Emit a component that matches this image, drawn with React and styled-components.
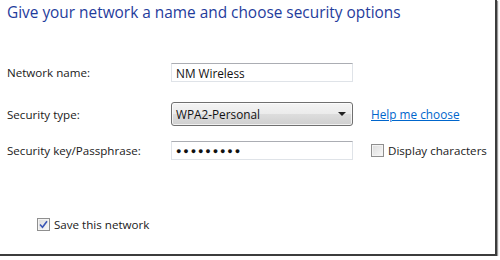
import React from "react";
import styled, { createGlobalStyle } from "styled-components";

const Global = createGlobalStyle`
  html, body { margin: 0; padding: 0; background: #fff; }
  body { font-family: "Open Sans", "Noto Sans", sans-serif; }
`;

const Frame = styled.div`
  box-sizing: border-box;
  width: 497px;
  height: 256px;
  border-right: 2px solid #3c3c3c;
  border-bottom: 2px solid #3c3c3c;
  box-shadow: 1px 1px 1px #9a9a9a;
  background: #fff;
  padding: 3px 0 0 7px;
  display: flex;
  flex-direction: column;
`;

const Title = styled.h1`
  margin: 0;
  font-size: 15.4px;
  font-weight: 400;
  line-height: 20px;
  color: #1f3c9c;
`;

const Form = styled.div`
  margin-top: 40px;
  display: grid;
  grid-template-columns: 146px 182px auto;
  column-gap: 18px;
  align-items: center;
`;

const Label = styled.div`
  font-size: 11.6px;
  color: #1a1a1a;
  height: ${p => p.$h}px;
  margin-bottom: ${p => p.$mb || 0}px;
  display: flex;
  align-items: center;
  white-space: nowrap;
`;

const TextBox = styled.div`
  box-sizing: border-box;
  height: 19px;
  margin-bottom: ${p => p.$mb || 0}px;
  border: 1px solid #dfe3e8;
  border-top-color: #abadb3;
  background: #fff;
  padding: 0 4px;
  font-size: 11.8px;
  color: #111;
  display: flex;
  align-items: center;
`;

const Dots = styled.span`
  font-size: 9px;
  letter-spacing: 1.9px;
  color: #111;
`;

const Select = styled.div`
  box-sizing: border-box;
  height: 24px;
  margin-bottom: 15px;
  border: 1px solid #707070;
  border-radius: 3px;
  background: linear-gradient(#f4f4f4 0%, #ebebeb 50%, #dddddd 51%, #cfcfcf 100%);
  box-shadow: inset 0 0 0 1px rgba(255,255,255,0.7);
  padding: 0 6px 0 4px;
  font-size: 11.8px;
  color: #111;
  display: flex;
  align-items: center;
  justify-content: space-between;
`;

const Arrow = styled.span`
  width: 0;
  height: 0;
  border-left: 4px solid transparent;
  border-right: 4px solid transparent;
  border-top: 4px solid #222;
`;

const Link = styled.a`
  font-size: 11.8px;
  color: #0066cc;
  text-decoration: underline;
  height: 24px;
  margin-bottom: 15px;
  display: flex;
  align-items: center;
  white-space: nowrap;
`;

const Empty = styled.div`
  margin-bottom: ${p => p.$mb || 0}px;
`;

const CheckRow = styled.label`
  display: flex;
  align-items: center;
  gap: 4px;
  font-size: 11.6px;
  color: #1a1a1a;
  height: 19px;
  white-space: nowrap;
`;

const Box = styled.span`
  box-sizing: border-box;
  width: 13px;
  height: 13px;
  border: 1px solid #8f8f8f;
  background: linear-gradient(135deg, #dcdcdc, #f8f8f8);
  box-shadow: inset 0 0 0 1px #f4f4f4;
  display: flex;
  align-items: center;
  justify-content: center;
`;

const SaveRow = styled.div`
  margin-top: 55px;
  padding-left: 30px;
`;

function Check({ checked }) {
  return (
    <Box>
      {checked && (
        <svg width="9" height="9" viewBox="0 0 9 9">
          <path d="M1 4.5 L3.5 7.2 L8 1.2" fill="none" stroke="#3a56b5" strokeWidth="1.6" />
        </svg>
      )}
    </Box>
  );
}

export default function App() {
  return (
    <>
      <Global />
      <Frame>
        <Title>Give your network a name and choose security options</Title>
        <Form>
          <Label $h={19} $mb={20}>Network name:</Label>
          <TextBox $mb={20}>NM Wireless</TextBox>
          <Empty $mb={20} />

          <Label $h={24} $mb={15}>Security type:</Label>
          <Select>
            <span>WPA2-Personal</span>
            <Arrow />
          </Select>
          <Link href="#">Help me choose</Link>

          <Label $h={19}>Security key/Passphrase:</Label>
          <TextBox><Dots>●●●●●●●●●</Dots></TextBox>
          <CheckRow>
            <Check />
            Display characters
          </CheckRow>
        </Form>
        <SaveRow>
          <CheckRow>
            <Check checked />
            Save this network
          </CheckRow>
        </SaveRow>
      </Frame>
    </>
  );
}
